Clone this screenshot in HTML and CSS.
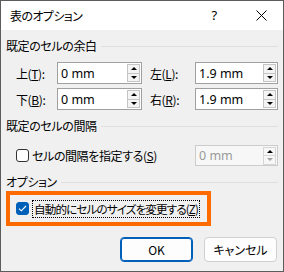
FILE: index.html
```html
<!DOCTYPE html>
<html lang="ja">
<head>
  <meta charset="UTF-8" />
  <title>表のオプション</title>
  <link rel="stylesheet" href="styles.css">
</head>
<body>
  <div class="dialog">
    <div class="titlebar">
      <span class="title">表のオプション</span>
      <span class="cap-help">?</span>
      <span class="cap-close">
        <svg width="11" height="11" viewBox="0 0 11 11"><path d="M0.5 0.5 L10.5 10.5 M10.5 0.5 L0.5 10.5" stroke="#000" stroke-width="1" fill="none"/></svg>
      </span>
    </div>

    <div class="content">
      <div class="group-head"><span>既定のセルの余白</span></div>
      <div class="margins">
        <label class="lbl">上(<u>T</u>):</label>
        <div class="spin"><span class="val">0 mm</span><div class="arrows"><i class="up"></i><i class="down"></i></div></div>
        <label class="lbl lbl-right">左(<u>L</u>):</label>
        <div class="spin"><span class="val">1.9 mm</span><div class="arrows"><i class="up"></i><i class="down"></i></div></div>
        <label class="lbl">下(<u>B</u>):</label>
        <div class="spin"><span class="val">0 mm</span><div class="arrows"><i class="up"></i><i class="down"></i></div></div>
        <label class="lbl lbl-right">右(<u>R</u>):</label>
        <div class="spin"><span class="val">1.9 mm</span><div class="arrows"><i class="up"></i><i class="down"></i></div></div>
      </div>

      <div class="group-head group-gap"><span>既定のセルの間隔</span></div>
      <div class="spacing">
        <span class="check"></span>
        <span class="check-label">セルの間隔を指定する(<u>S</u>)</span>
        <div class="spin disabled"><span class="val">0 mm</span><div class="arrows"><i class="up"></i><i class="down"></i></div></div>
      </div>

      <div class="group-head group-gap"><span>オプション</span></div>
      <div class="highlight">
        <span class="check checked">
          <svg width="9" height="7" viewBox="0 0 9 7"><path d="M1 3.6 L3.3 5.8 L8 1" stroke="#fff" stroke-width="1.1" fill="none"/></svg>
        </span>
        <span class="check-label focus">自動的にセルのサイズを変更する(<u>Z</u>)</span>
      </div>

      <div class="buttons">
        <button class="btn primary">OK</button>
        <button class="btn">キャンセル</button>
      </div>
    </div>
  </div>
</body>
</html>
```

FILE: styles.css
```css
body {
  margin: 0;
  font-family: "Noto Sans CJK JP", sans-serif;
  font-size: 12px;
  font-feature-settings: "palt";
  letter-spacing: -0.4px;
  color: #000;
  white-space: nowrap;
}
.dialog {
  width: 284px;
  height: 272px;
  box-sizing: border-box;
  border: 1px solid #5c5c5c;
  background: #f0f0f0;
}
.titlebar {
  height: 29px;
  background: #fff;
  display: flex;
  align-items: center;
  padding-left: 9px;
}
.title {
  flex: 1;
  font-size: 12px;
  letter-spacing: -0.6px;
}
.cap-help {
  width: 46px;
  text-align: center;
  font-family: "Noto Sans", sans-serif;
  font-size: 13px;
  margin-top: -1px;
  margin-right: 2px;
}
.cap-close {
  width: 44px;
  display: flex;
  justify-content: center;
}
.content {
  padding: 8px 5px 0 5px;
}
.group-head {
  display: flex;
  align-items: center;
  height: 16px;
  line-height: 16px;
}
.group-head::after {
  content: "";
  flex: 1;
  height: 1px;
  background: #dedede;
  margin-left: 4px;
}
.group-gap {
  margin-top: 8px;
}
.margins {
  display: grid;
  grid-template-columns: 41px 85px 53px 83px;
  row-gap: 4px;
  padding-left: 10px;
  margin-top: 8px;
}
.lbl {
  display: flex;
  align-items: center;
  height: 22px;
}
.lbl-right {
  padding-left: 8px;
}
.spin {
  position: relative;
  height: 22px;
  box-sizing: border-box;
  border: 1px solid #a0a0a0;
  background: #fff;
  display: flex;
  align-items: center;
}
.val {
  flex: 1;
  padding-left: 3px;
  font-family: "Noto Sans", sans-serif;
  font-size: 12.5px;
  letter-spacing: 0;
  font-feature-settings: normal;
}
.arrows {
  width: 13px;
  height: 18px;
  margin-right: 1px;
  display: flex;
  flex-direction: column;
}
.arrows i {
  flex: 1;
  border: 1px solid #c4c4c4;
  background: #f4f4f4;
  display: flex;
  align-items: center;
  justify-content: center;
}
.arrows i.down {
  border-top: none;
}
.arrows i::before {
  content: "";
  width: 0;
  height: 0;
  border-left: 3px solid transparent;
  border-right: 3px solid transparent;
}
.arrows i.up::before {
  border-bottom: 3px solid #000;
}
.arrows i.down::before {
  border-top: 3px solid #000;
}
.spacing {
  display: flex;
  align-items: center;
  margin-top: 11px;
  padding-left: 10px;
}
.spacing .check-label {
  flex: 1;
}
.spacing .spin {
  width: 83px;
  height: 21px;
}
.spin.disabled {
  border-color: #cccccc;
  background: #f7f7f7;
}
.spin.disabled .val {
  color: #9a9a9a;
}
.spin.disabled i {
  background: #f7f7f7;
  border-color: #d6d6d6;
}
.spin.disabled i.down::before {
  border-top-color: #a0a0a0;
}
.check {
  flex: none;
  width: 13px;
  height: 13px;
  box-sizing: border-box;
  border: 1px solid #333;
  border-radius: 3px;
  background: #fff;
  margin-right: 3px;
  display: flex;
  align-items: center;
  justify-content: center;
}
.check.checked {
  background: #005fb8;
  border-color: #005fb8;
}
.highlight {
  margin-top: 1px;
  width: 205px;
  height: 35px;
  box-sizing: border-box;
  border: 4px solid #ff6a00;
  display: flex;
  align-items: center;
  padding-left: 6px;
}
.check-label.focus {
  outline: 1px dotted #000;
  padding: 0 1px;
  line-height: 16px;
  margin-left: 1px;
  font-size: 11.6px;
  letter-spacing: -0.9px;
}
.buttons {
  display: flex;
  justify-content: flex-end;
  gap: 11px;
  margin-top: 11px;
  padding-right: 1px;
}
.btn {
  width: 73px;
  height: 25px;
  font-family: "Noto Sans CJK JP", sans-serif;
  font-feature-settings: "palt";
  font-size: 12px;
  color: #000;
  background: #fdfdfd;
  border: 1px solid #d0d0d0;
  border-radius: 4px;
  padding: 0;
}
.btn.primary {
  border-color: #005fb8;
  box-shadow: inset 0 0 0 1px #005fb8;
}
```
